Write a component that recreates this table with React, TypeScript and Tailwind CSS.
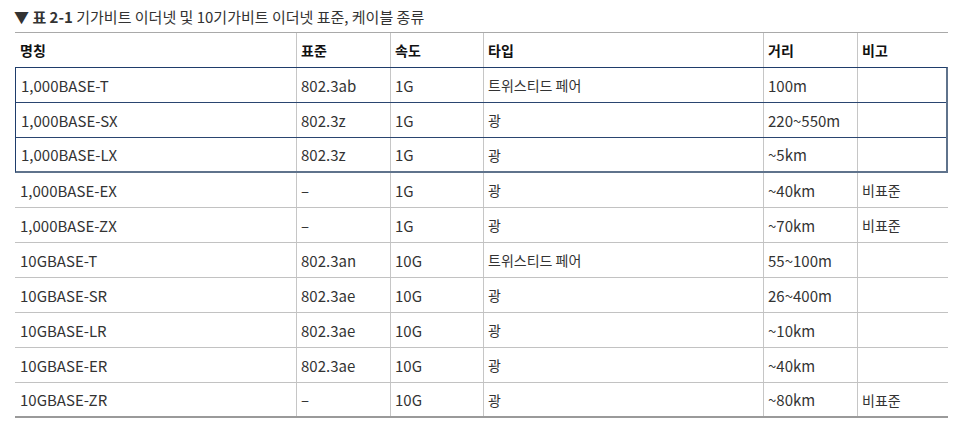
import React from "react";

type Row = [string, string, string, string, string, string];

const rows: Row[] = [
  ["1,000BASE-T", "802.3ab", "1G", "트위스티드 페어", "100m", ""],
  ["1,000BASE-SX", "802.3z", "1G", "광", "220~550m", ""],
  ["1,000BASE-LX", "802.3z", "1G", "광", "~5km", ""],
  ["1,000BASE-EX", "–", "1G", "광", "~40km", "비표준"],
  ["1,000BASE-ZX", "–", "1G", "광", "~70km", "비표준"],
  ["10GBASE-T", "802.3an", "10G", "트위스티드 페어", "55~100m", ""],
  ["10GBASE-SR", "802.3ae", "10G", "광", "26~400m", ""],
  ["10GBASE-LR", "802.3ae", "10G", "광", "~10km", ""],
  ["10GBASE-ER", "802.3ae", "10G", "광", "~40km", ""],
  ["10GBASE-ZR", "–", "10G", "광", "~80km", "비표준"],
];

const isKo = (s: string) => /[\uac00-\ud7a3]/.test(s);

function Cell({ text, header, cls }: { text: string; header?: boolean; cls: string }) {
  const color = header ? "font-bold text-[#111]" : "text-[#333]";
  const size = isKo(text) ? "text-[14px]" : "text-[15px]";
  return <div className={`flex items-center ${cls} ${color} ${size}`}>{text}</div>;
}

function Cells({ r, header, lastW }: { r: Row; header?: boolean; lastW: string }) {
  return (
    <>
      <Cell text={r[0]} header={header} cls="flex-1 pl-[5px]" />
      <Cell text={r[1]} header={header} cls="w-[94px] pl-[4px] border-l border-[#c6c6c6]" />
      <Cell text={r[2]} header={header} cls="w-[93px] pl-[4px] border-l border-[#c6c6c6]" />
      <Cell text={r[3]} header={header} cls="w-[280px] pl-[4px] border-l border-[#c6c6c6]" />
      <Cell text={r[4]} header={header} cls="w-[94px] pl-[4px] border-l border-[#c6c6c6]" />
      <Cell text={r[5]} header={header} cls={`${lastW} pl-[4px] border-l border-[#c6c6c6]`} />
    </>
  );
}

export default function App() {
  return (
    <div
      className="w-[954px] h-[427px] bg-white leading-none"
      style={{ fontFamily: '"Noto Sans CJK KR", "Noto Sans", sans-serif' }}
    >
      <div className="h-[32px] pl-[14px] pt-[9px] text-[#333] text-[15px] whitespace-nowrap">
        <span className="font-bold">▼ 표 2-1</span> 기가비트 이더넷 및 10기가비트 이더넷 표준, 케이블 종류
      </div>
      <div className="ml-[15px] w-[933px]">
        <div className="flex h-[35px] border-t border-[#a9a9a9]">
          <Cells r={["명칭", "표준", "속도", "타입", "거리", "비고"]} header lastW="w-[91px]" />
        </div>
        <div className="border-t border-l border-[#1f3d6b] border-r-2 border-r-[#5f738c] border-b-2 border-b-[#5f738c]">
          {rows.slice(0, 3).map((r, i) => (
            <div
              key={i}
              className={`flex ${i < 2 ? "h-[35px] border-b border-[#2a4570]" : "h-[33px]"}`}
            >
              <Cells r={r} lastW="w-[89px]" />
            </div>
          ))}
        </div>
        {rows.slice(3).map((r, i) => (
          <div
            key={i}
            className={`flex h-[35px] ${i === 6 ? "border-b-2 border-[#9a9a9a]" : "border-b border-[#c2c2c2]"}`}
          >
            <Cells r={r} lastW="w-[91px]" />
          </div>
        ))}
      </div>
    </div>
  );
}
